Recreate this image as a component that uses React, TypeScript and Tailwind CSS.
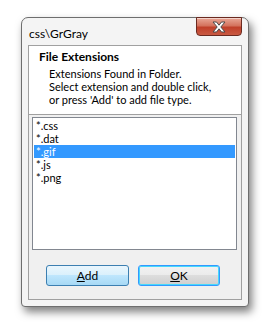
import React, { useState } from 'react';

const EXTS = ['*.css', '*.dat', '*.gif', '*.js', '*.png'];

function CloseGlyph() {
  return (
    <svg width="16" height="12" viewBox="0 0 16 12">
      <path
        d="M2 1h3.5L8 4.2 10.5 1H14l-4.2 5L14 11h-3.5L8 7.8 5.5 11H2l4.2-5z"
        fill="#ffffff"
        stroke="#4a4a4a"
        strokeWidth="1"
        strokeLinejoin="round"
      />
    </svg>
  );
}

export default function App() {
  const [sel, setSel] = useState('*.gif');

  return (
    <div className="w-[276px] h-[333px] bg-white pt-[17px] pl-[21px] font-['Lato','Liberation_Sans',sans-serif] text-[12px] text-black">
      {/* window */}
      <div className="relative w-[228px] h-[290px] flex flex-col border border-[#6e6e6e] rounded-t-[7px] rounded-b-[4px] bg-[#f4f4f4] shadow-[3px_5px_9px_rgba(0,0,0,0.5)]">
        {/* title bar */}
        <div className="h-[27px] flex items-start justify-between pl-[7px] pr-[6px]">
          <span className="mt-[9px] leading-[14px]">css\GrGray</span>
          <button className="mt-[-1px] w-[46px] h-[19px] rounded-b-[4px] border border-[#6b2a20] flex items-center justify-center bg-[linear-gradient(#e9a897,#d4735e_45%,#c0402a_55%,#c95a43)] shadow-[inset_0_1px_0_rgba(255,255,255,0.5)]">
            <CloseGlyph />
          </button>
        </div>

        {/* client area */}
        <div className="flex-1 mx-[6px] mb-[6px] border border-[#a0a0a0] bg-[#f0f0f0] flex flex-col">
          <div className="bg-white border-b border-[#a0a0a0] h-[69px] pl-[10px] pt-[4px] leading-[13px]">
            <div className="font-bold">File Extensions</div>
            <div className="pl-[10px] mt-[4px] text-[11px]">
              <div>Extensions Found in Folder.</div>
              <div>Select extension and double click,</div>
              <div>or press 'Add' to add file type.</div>
            </div>
          </div>

          {/* list box */}
          <div className="ml-[3px] mr-[4px] mt-[2px] h-[133px] border border-[#828790] bg-white pt-[1px] px-[1px] text-[11px]">
            {EXTS.map(e => (
              <div
                key={e}
                onClick={() => setSel(e)}
                className={`h-[13px] leading-[13px] pl-[2px] ${sel === e ? 'bg-[#3399ff] text-white' : ''}`}
              >
                {e}
              </div>
            ))}
          </div>

          {/* buttons */}
          <div className="flex gap-[9px] pl-[17px] mt-[15px]">
            <button className="w-[83px] h-[21px] rounded-[3px] border border-[#3c7fb1] bg-[linear-gradient(#eaf6fd,#d9f0fc_50%,#bee6fd_50%,#a7d9f5)] leading-[18px]">
              <span className="underline">A</span>dd
            </button>
            <button className="w-[82px] h-[21px] rounded-[3px] border border-[#3399ff] shadow-[inset_0_0_0_1px_#48d8fb] bg-[linear-gradient(#f2f2f2,#ebebeb_50%,#dddddd_50%,#cfcfcf)] leading-[18px]">
              <span className="underline">O</span>K
            </button>
          </div>
        </div>
      </div>
    </div>
  );
}
